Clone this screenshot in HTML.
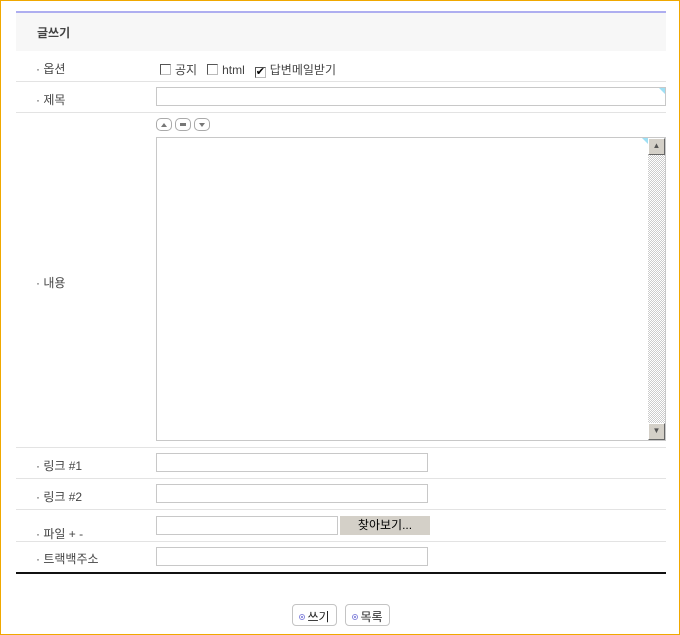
<!DOCTYPE html>
<html><head><meta charset="utf-8"><style>
*{margin:0;padding:0;box-sizing:border-box}
body{width:680px;height:635px;position:relative;background:#fff;font-family:"Liberation Sans","Noto Sans CJK KR","NanumGothic",sans-serif;font-size:12px;color:#444;overflow:hidden}
.frame{position:absolute;left:0;top:0;width:680px;height:635px;border:1px solid #f0a800}
.a{position:absolute}
.hl{position:absolute;left:16px;width:650px;height:1px;background:#e3e3e3}
.lbl{position:absolute;left:36px;font-size:12px;color:#444}
.inp{position:absolute;border:1px solid #c8c8c8;background:#fff}
.cb{display:inline-block;width:11px;height:11px;border:1px solid #555;border-right-color:#bbb;border-bottom-color:#bbb;vertical-align:-1px;margin-right:4px;background:#fff;position:relative}
.btn{position:absolute;top:604px;height:22px;border:1px solid #c4c4c4;border-radius:4px;background:#fff;font-size:12px;color:#222;padding:3px 0 0 0;text-align:center}
.dot{display:inline-block;width:6px;height:6px;border:1px solid #8888dd;border-radius:50%;vertical-align:1px;margin-right:2px;background:radial-gradient(#8888dd 35%,#fff 40%)}
.sb{display:inline-block;width:16px;height:13px;border:1px solid #aaa;border-radius:5px;margin-right:3px;position:relative;vertical-align:top}
.sb i{position:absolute;left:4px;top:3px;width:0;height:0}
</style></head><body>
<div class="frame"></div>
<div class="a" style="left:16px;top:11px;width:650px;height:2px;background:#aeaef0"></div>
<div class="a" style="left:16px;top:13px;width:650px;height:38px;background:#f7f7f7"></div>
<div class="a" style="left:37px;top:24px;font-weight:bold;color:#444;font-size:12px">글쓰기</div>

<div class="lbl" style="top:60px">· 옵션</div>
<div class="a" style="left:160px;top:61px;color:#444"><span class="cb"></span>공지 &nbsp;&nbsp;<span class="cb"></span>html &nbsp;&nbsp;<span class="cb" style="font-size:11px;line-height:8px;color:#000">✔</span>답변메일받기</div>
<div class="hl" style="top:81px"></div>

<div class="lbl" style="top:91px">· 제목</div>
<div class="inp" style="left:156px;top:87px;width:510px;height:19px"><div class="a" style="right:0;top:0;width:0;height:0;border-top:6px solid #9fe0f5;border-left:6px solid transparent"></div></div>
<div class="hl" style="top:112px"></div>

<div class="a" style="left:156px;top:118px"><span class="sb"><i style="border-left:3px solid transparent;border-right:3px solid transparent;border-bottom:4px solid #777;top:4px"></i></span><span class="sb"><i style="width:6px;height:3px;background:#777;top:4px"></i></span><span class="sb"><i style="border-left:3px solid transparent;border-right:3px solid transparent;border-top:4px solid #777;top:4px"></i></span></div>
<div class="lbl" style="top:274px">· 내용</div>
<div class="inp" style="left:156px;top:137px;width:510px;height:304px">
<div class="a" style="right:17px;top:0;width:0;height:0;border-top:6px solid #9fe0f5;border-left:6px solid transparent"></div>
<div class="a" style="right:0;top:0;width:17px;height:302px;background:repeating-conic-gradient(#ccc 0 25%,#fff 0 50%) 0 0/2px 2px"></div>
<div class="a" style="right:0;top:0;width:17px;height:17px;background:#d4d0c8;border:1px solid #fff;border-right-color:#666;border-bottom-color:#666;font-size:8px;text-align:center;line-height:14px;color:#555">▲</div>
<div class="a" style="right:0;bottom:0;width:17px;height:17px;background:#d4d0c8;border:1px solid #fff;border-right-color:#666;border-bottom-color:#666;font-size:8px;text-align:center;line-height:14px;color:#555">▼</div>
</div>
<div class="hl" style="top:447px"></div>

<div class="lbl" style="top:457px">· 링크 #1</div>
<div class="inp" style="left:156px;top:453px;width:272px;height:19px"></div>
<div class="hl" style="top:478px"></div>
<div class="lbl" style="top:488px">· 링크 #2</div>
<div class="inp" style="left:156px;top:484px;width:272px;height:19px"></div>
<div class="hl" style="top:509px"></div>
<div class="lbl" style="top:525px">· 파일 + -</div>
<div class="inp" style="left:156px;top:516px;width:182px;height:19px"></div>
<div class="a" style="left:340px;top:516px;width:90px;height:19px;background:#d4d0c8;color:#000;text-align:center;line-height:18px">찾아보기...</div>
<div class="hl" style="top:541px"></div>
<div class="lbl" style="top:550px">· 트랙백주소</div>
<div class="inp" style="left:156px;top:547px;width:272px;height:19px"></div>
<div class="a" style="left:16px;top:572px;width:650px;height:2px;background:#111"></div>

<div class="btn" style="left:292px;width:45px"><span class="dot"></span>쓰기</div>
<div class="btn" style="left:345px;width:45px"><span class="dot"></span>목록</div>
</body></html>
